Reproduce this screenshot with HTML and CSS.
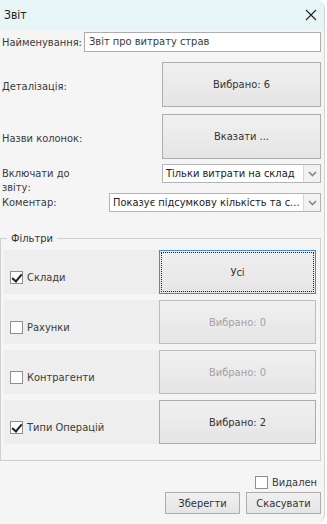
FILE: index.html
```html
<!DOCTYPE html>
<html>
<head>
  <title>Звіт</title>
  <link rel="stylesheet" href="styles.css">
</head>
<body>
  <div class="window">
    <div class="titlebar">
      <span class="title">Звіт</span>
      <svg class="close" width="12" height="12" viewBox="0 0 12 12">
        <path d="M1 1 L11 11 M11 1 L1 11" stroke="#222" stroke-width="1.1" fill="none"/>
      </svg>
    </div>

    <div class="content">
      <div class="row row-name">
        <label class="lbl">Найменування:</label>
        <div class="textbox">Звіт про витрату страв</div>
      </div>

      <div class="row row-big first">
        <label class="lbl">Деталізація:</label>
        <div class="btn big">Вибрано: 6</div>
      </div>

      <div class="row row-big second">
        <label class="lbl">Назви колонок:</label>
        <div class="btn big">Вказати ...</div>
      </div>

      <div class="row row-select include">
        <label class="lbl two-lines">Включати до<br>звіту:</label>
        <div class="select sel-include">
          <span class="sel-text">Тільки витрати на склад</span>
          <span class="sel-arrow"><svg width="9" height="6" viewBox="0 0 9 6"><path d="M1 1 L4.5 4.5 L8 1" stroke="#888" stroke-width="1.6" fill="none"/></svg></span>
        </div>
      </div>

      <div class="row row-select comment">
        <label class="lbl">Коментар:</label>
        <div class="select sel-comment">
          <span class="sel-text">Показує підсумкову кількість та с...</span>
          <span class="sel-arrow"><svg width="9" height="6" viewBox="0 0 9 6"><path d="M1 1 L4.5 4.5 L8 1" stroke="#888" stroke-width="1.6" fill="none"/></svg></span>
        </div>
      </div>

      <fieldset class="filters">
        <legend>Фільтри</legend>

        <div class="filter-row">
          <div class="filter-label"><span class="check checked"></span>Склади</div>
          <div class="btn filter-btn focused"><span class="focus-ring">Усі</span></div>
        </div>

        <div class="filter-row">
          <div class="filter-label"><span class="check"></span>Рахунки</div>
          <div class="btn filter-btn disabled">Вибрано: 0</div>
        </div>

        <div class="filter-row">
          <div class="filter-label"><span class="check"></span>Контрагенти</div>
          <div class="btn filter-btn disabled">Вибрано: 0</div>
        </div>

        <div class="filter-row">
          <div class="filter-label"><span class="check checked"></span>Типи Операцій</div>
          <div class="btn filter-btn">Вибрано: 2</div>
        </div>
      </fieldset>

      <div class="deleted">
        <span class="check"></span><span class="deleted-text">Видалені</span>
      </div>

      <div class="actions">
        <div class="btn action">Зберегти</div>
        <div class="btn action">Скасувати</div>
      </div>
    </div>
  </div>
</body>
</html>
```

FILE: styles.css
```css
body {
  margin: 0;
  background-color: #fff;
  font-family: "DejaVu Sans", sans-serif;
  font-stretch: condensed;
  font-size: 11px;
  color: #3a3a3a;
}

.window {
  width: 325px;
  height: 524px;
  box-sizing: border-box;
  background-color: #f5f5f5;
  border-right: 1px solid #d4d4d4;
  border-radius: 0 9px 9px 0;
  overflow: hidden;
}

.titlebar {
  height: 30px;
  background-color: #e7f5f7;
  display: flex;
  align-items: center;
  justify-content: space-between;
  padding: 0 7px 0 4px;
}

.title {
  font-size: 12px;
  color: #222;
}

.content {
  padding: 0 3px 0 2px;
}

.row {
  display: flex;
  justify-content: space-between;
}

.lbl {
  white-space: nowrap;
}

.row-name {
  margin-top: 2px;
  height: 20px;
  align-items: center;
}

.textbox {
  width: 237px;
  height: 20px;
  box-sizing: border-box;
  background-color: #fff;
  border: 1px solid #adadad;
  padding: 0 4px;
  line-height: 18px;
}

.row-big {
  height: 45px;
  align-items: center;
}

.row-big .lbl {
  margin-top: 4px;
}

.row-big.first {
  margin-top: 10px;
}

.row-big.second {
  margin-top: 7px;
}

.btn {
  box-sizing: border-box;
  border: 1px solid #adadad;
  background: linear-gradient(#f0f0f0, #e5e5e5);
  display: flex;
  align-items: center;
  justify-content: center;
  color: #333;
}

.big {
  width: 159px;
  height: 45px;
}

.row-select {
  height: 19px;
}

.include {
  margin-top: 5px;
  align-items: flex-start;
}

.two-lines {
  line-height: 14px;
  margin-top: 3px;
}

.comment {
  margin-top: 10px;
  align-items: center;
}

.select {
  height: 19px;
  box-sizing: border-box;
  border: 1px solid #b4b4b4;
  background-color: #fff;
  display: flex;
}

.sel-include {
  width: 159px;
}

.sel-comment {
  width: 212px;
}

.sel-text {
  flex: 1;
  padding-left: 3px;
  line-height: 17px;
  white-space: nowrap;
  overflow: hidden;
  color: #222;
}

.sel-arrow {
  width: 16px;
  border-left: 1px solid #d8d8d8;
  background-color: #f2f2f2;
  display: flex;
  align-items: center;
  justify-content: center;
}

.filters {
  margin: 20px 0 0 -2px;
  width: 321px;
  box-sizing: border-box;
  border: 1px solid #cfcfcf;
  padding: 5px 4px 16px 3px;
}

.filters legend {
  padding: 0 4px;
  margin-left: 3px;
  color: #333;
}

.filter-row {
  display: flex;
  height: 44px;
  margin-bottom: 6px;
  background-color: #eeeeee;
}

.filter-row:last-child {
  margin-bottom: 0;
}

.filter-label {
  flex: 1;
  display: flex;
  align-items: center;
  padding: 10px 0 0 6px;
}

.check {
  display: inline-block;
  width: 13px;
  height: 13px;
  box-sizing: border-box;
  border: 1px solid #8f8f8f;
  background-color: #fff;
  margin-right: 4px;
  position: relative;
}

.check.checked::after {
  content: "";
  position: absolute;
  left: 3px;
  top: 0px;
  width: 4px;
  height: 8px;
  border: solid #222;
  border-width: 0 2px 2px 0;
  transform: rotate(40deg);
}

.filter-btn {
  width: 157px;
  height: 44px;
}

.filter-btn.disabled {
  color: #a3a3a3;
  border-color: #bdbdbd;
}

.filter-btn.focused {
  border-color: #3c8ce6;
  padding: 1px;
  align-items: stretch;
}

.focus-ring {
  flex: 1;
  border: 1px dotted #222;
  display: flex;
  align-items: center;
  justify-content: center;
}

.deleted {
  margin: 14px 4px 0 0;
  display: flex;
  align-items: center;
  justify-content: flex-end;
  overflow: hidden;
  height: 14px;
}

.deleted .check {
  margin-right: 4px;
  flex-shrink: 0;
}

.deleted-text {
  width: 45px;
  overflow: hidden;
  white-space: nowrap;
}

.actions {
  margin-top: 3px;
  display: flex;
  justify-content: flex-end;
  gap: 6px;
}

.action {
  width: 75px;
  height: 22px;
}
```
